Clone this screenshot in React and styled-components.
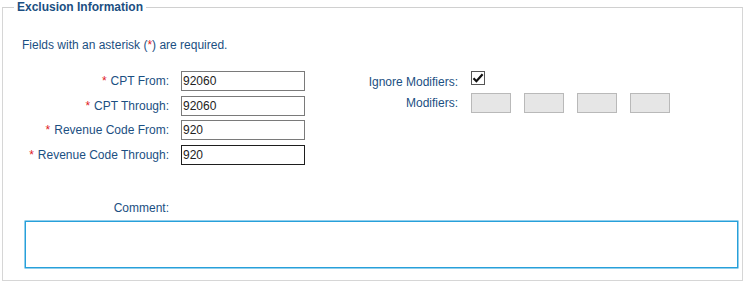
import React from "react";
import styled, { createGlobalStyle } from "styled-components";

const GlobalStyle = createGlobalStyle`
  html, body {
    margin: 0;
    padding: 0;
    background: #ffffff;
  }
  body {
    font-family: "Liberation Sans", Arial, sans-serif;
    font-size: 12px;
    color: #1b4f82;
  }
`;

const Fieldset = styled.fieldset`
  margin: 0 1px 0 2px;
  padding: 0 4px 12px 0;
  border: 1px solid #d6d6d6;
  border-top-color: #d0d0d0;
  height: 281px;
  box-sizing: border-box;
  min-width: 0;
`;

const Legend = styled.legend`
  margin-left: 11px;
  padding: 0 3px;
  font-size: 12px;
  line-height: 14px;
  font-weight: bold;
  color: #1b4f82;
`;

const Note = styled.p`
  margin: 24px 0 0 19px;
  line-height: 14px;
`;

const Star = styled.span`
  color: #e0201f;
  margin-right: ${(p) => (p.$gap ? "4px" : "0")};
`;

const FieldsArea = styled.div`
  display: flex;
  align-items: flex-start;
  margin: 19px 0 0 19px;
`;

const LeftGrid = styled.div`
  display: grid;
  grid-template-columns: 149px 124px;
  grid-auto-rows: 20px;
  column-gap: 10px;
  row-gap: 4.67px;
  align-items: center;
`;

const RightGrid = styled.div`
  display: grid;
  grid-template-columns: 110px auto;
  grid-template-rows: 22px 20px;
  column-gap: 11px;
  margin-left: 45px;
  align-items: center;
`;

const Label = styled.label`
  text-align: right;
  line-height: 14px;
  padding-right: 2px;
  white-space: nowrap;
`;

const TextInput = styled.input`
  box-sizing: border-box;
  width: 124px;
  height: 20px;
  margin: 0;
  padding: 0 0 0 1px;
  border: 1px solid ${(p) => (p.$dark ? "#1e1e1e" : "#7a7a7a")};
  border-radius: 0;
  font-family: "Liberation Sans", Arial, sans-serif;
  font-size: 12px;
  color: #222;
  outline: none;
`;

const CheckBox = styled.span`
  align-self: start;
  box-sizing: border-box;
  width: 14px;
  height: 14px;
  border: 1px solid #555;
  background: #fff;
  display: flex;
  align-items: center;
  justify-content: center;
`;

const Modifiers = styled.div`
  display: flex;
  gap: 13px;
`;

const ModBox = styled.input`
  box-sizing: border-box;
  width: 40px;
  height: 20px;
  margin: 0;
  padding: 0;
  border: 1px solid #b9b9b9;
  background: #e6e6e6;
  outline: none;
`;

const CommentRow = styled.div`
  display: grid;
  grid-template-columns: 149px;
  margin: 36px 0 0 19px;
`;

const CommentBox = styled.textarea`
  display: block;
  box-sizing: border-box;
  width: 713px;
  height: 47px;
  margin: 6px 0 0 22px;
  padding: 2px;
  border: 1px solid #27a0da;
  box-shadow: 0 0 0 0.5px #27a0da;
  resize: none;
  outline: none;
  font-family: "Liberation Sans", Arial, sans-serif;
  font-size: 12px;
`;

const rows = [
  { label: "CPT From:", value: "92060" },
  { label: "CPT Through:", value: "92060" },
  { label: "Revenue Code From:", value: "920" },
  { label: "Revenue Code Through:", value: "920", dark: true },
];

const App = () => {
  return (
    <>
      <GlobalStyle />
      <Fieldset>
        <Legend>Exclusion Information</Legend>
        <Note>
          Fields with an asterisk (<Star>*</Star>) are required.
        </Note>

        <FieldsArea>
          <LeftGrid>
            {rows.map((row) => (
              <React.Fragment key={row.label}>
                <Label>
                  <Star $gap>*</Star>
                  {row.label}
                </Label>
                <TextInput defaultValue={row.value} $dark={row.dark} />
              </React.Fragment>
            ))}
          </LeftGrid>

          <RightGrid>
            <Label>Ignore Modifiers:</Label>
            <CheckBox>
              <svg width="12" height="12" viewBox="0 0 12 12">
                <path
                  d="M1.5 6.2 L4.4 9.2 L10.6 2.2"
                  fill="none"
                  stroke="#111"
                  strokeWidth="2.2"
                />
              </svg>
            </CheckBox>
            <Label>Modifiers:</Label>
            <Modifiers>
              {[0, 1, 2, 3].map((i) => (
                <ModBox key={i} />
              ))}
            </Modifiers>
          </RightGrid>
        </FieldsArea>

        <CommentRow>
          <Label>Comment:</Label>
        </CommentRow>
        <CommentBox />
      </Fieldset>
    </>
  );
};

export default App;
